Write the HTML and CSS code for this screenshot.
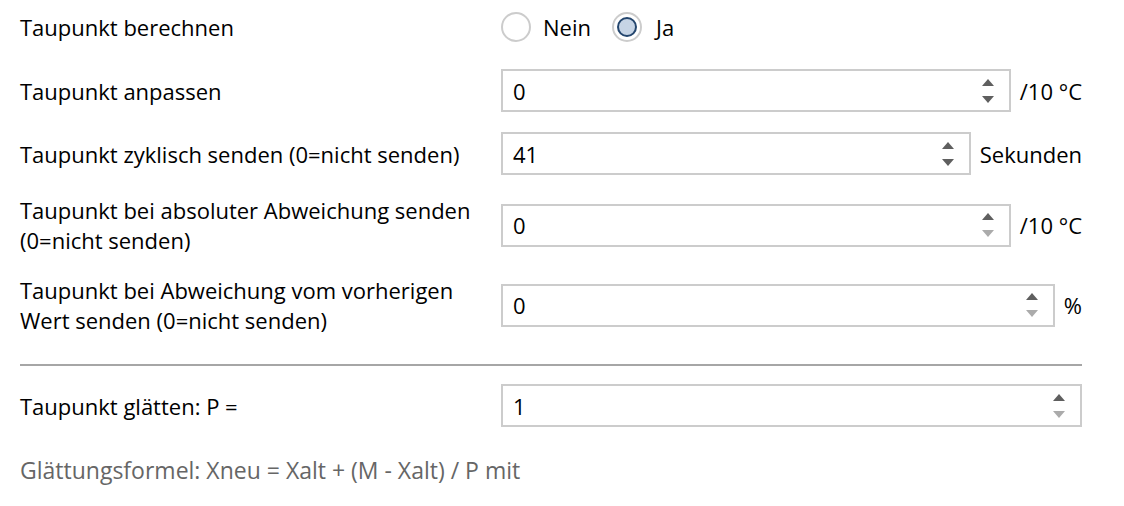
FILE: index.html
```html
<!DOCTYPE html>
<html lang="de">
<head>
<meta charset="utf-8">
<link rel="stylesheet" href="styles.css">
</head>
<body>
<div class="form">
  <div class="row row-radio">
    <div class="label">Taupunkt berechnen</div>
    <div class="radios">
      <span class="radio"><span class="dot"></span><span class="rtext">Nein</span></span>
      <span class="radio checked"><span class="dot"></span><span class="rtext">Ja</span></span>
    </div>
  </div>
  <div class="row">
    <div class="label">Taupunkt anpassen</div>
    <div class="field">
      <div class="spin"><span class="val">0</span><span class="arrows"><span class="up"></span><span class="down"></span></span></div>
      <span class="unit">/10 °C</span>
    </div>
  </div>
  <div class="row">
    <div class="label">Taupunkt zyklisch senden (0=nicht senden)</div>
    <div class="field">
      <div class="spin"><span class="val">41</span><span class="arrows"><span class="up"></span><span class="down"></span></span></div>
      <span class="unit">Sekunden</span>
    </div>
  </div>
  <div class="row">
    <div class="label">Taupunkt bei absoluter Abweichung senden (0=nicht senden)</div>
    <div class="field">
      <div class="spin"><span class="val">0</span><span class="arrows"><span class="up"></span><span class="down off"></span></span></div>
      <span class="unit">/10 °C</span>
    </div>
  </div>
  <div class="row">
    <div class="label">Taupunkt bei Abweichung vom vorherigen Wert senden (0=nicht senden)</div>
    <div class="field">
      <div class="spin"><span class="val">0</span><span class="arrows"><span class="up"></span><span class="down off"></span></span></div>
      <span class="unit">%</span>
    </div>
  </div>
  <hr class="divider">
  <div class="row">
    <div class="label">Taupunkt glätten: P =</div>
    <div class="field">
      <div class="spin"><span class="val">1</span><span class="arrows"><span class="up"></span><span class="down off"></span></span></div>
    </div>
  </div>
  <div class="note">Glättungsformel: Xneu = Xalt + (M - Xalt) / P mit</div>
</div>
</body>
</html>
```
FILE: styles.css
```css
html, body {
  margin: 0;
  padding: 0;
  background: #fff;
}
body {
  font-family: "Open Sans", "Noto Sans", sans-serif;
  font-size: 22px;
  color: #000;
}
.form {
  width: 1062px;
  padding: 12px 0 0 20px;
  display: flex;
  flex-direction: column;
}
.row {
  display: grid;
  grid-template-columns: 481px 1fr;
  align-items: center;
  margin-bottom: 20px;
}
.row-radio {
  margin-bottom: 27px;
}
.label {
  line-height: 30px;
  padding-right: 20px;
}
.radios {
  display: flex;
  align-items: center;
  height: 30px;
}
.radio {
  display: inline-flex;
  align-items: center;
  margin-right: 21px;
}
.dot {
  width: 26px;
  height: 26px;
  border: 2px solid #cccccc;
  border-radius: 50%;
  display: inline-flex;
  align-items: center;
  justify-content: center;
  box-sizing: content-box;
}
.checked .dot::after {
  content: "";
  width: 16px;
  height: 16px;
  border: 2px solid #24466e;
  border-radius: 50%;
  background: #c6d4e5;
}
.rtext {
  margin-left: 12px;
  line-height: 30px;
}
.checked .rtext {
  margin-left: 14px;
}
.field {
  display: flex;
  align-items: center;
}
.spin {
  flex: 1;
  height: 39px;
  border: 2px solid #cccccc;
  display: flex;
  align-items: center;
  justify-content: space-between;
  padding: 0 15px 0 10px;
  background: #fff;
}
.val {
  line-height: 30px;
}
.arrows {
  display: flex;
  flex-direction: column;
  align-items: center;
  gap: 10px;
}
.up {
  width: 0;
  height: 0;
  border-left: 6px solid transparent;
  border-right: 6px solid transparent;
  border-bottom: 7px solid #5f5f5f;
}
.down {
  width: 0;
  height: 0;
  border-left: 6px solid transparent;
  border-right: 6px solid transparent;
  border-top: 7px solid #5f5f5f;
}
.down.off {
  border-top-color: #ababab;
}
.unit {
  margin-left: 9px;
  line-height: 30px;
}
.divider {
  border: none;
  height: 2px;
  background: #a6a6a6;
  margin: 9px 0 18px 0;
  width: 100%;
}
.note {
  color: #666666;
  font-size: 23px;
  line-height: 30px;
  margin-top: 8px;
}
```
